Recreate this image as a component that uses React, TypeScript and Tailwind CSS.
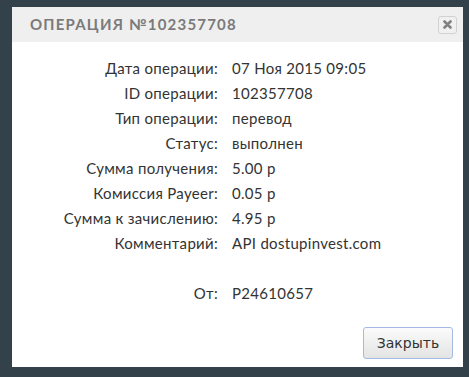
const rows: [string, string][] = [
  ["Дата операции:", "07 Ноя 2015 09:05"],
  ["ID операции:", "102357708"],
  ["Тип операции:", "перевод"],
  ["Статус:", "выполнен"],
  ["Сумма получения:", "5.00 р"],
  ["Комиссия Payeer:", "0.05 р"],
  ["Сумма к зачислению:", "4.95 р"],
  ["Комментарий:", "API dostupinvest.com"],
  ["", ""],
  ["От:", "P24610657"],
];

export default function App() {
  return (
    <div className="h-[377px] w-[469px] bg-[#33414a] pl-[12px] pt-[7px]">
      <div className="flex h-[360px] w-[451px] flex-col bg-white">
        {/* header */}
        <div className="flex h-[35px] items-center justify-between bg-[#efefef] pl-[18px] pr-[6px]">
          <span className="font-['Lato',sans-serif] text-[15px] font-bold tracking-[1.2px] text-[#7a7a7a]">
            ОПЕРАЦИЯ №102357708
          </span>
          <button className="flex h-[18px] w-[19px] items-center justify-center rounded-[3px] border border-[#d2d2d2] bg-[#f0f0f0]">
            <svg width="9" height="9" viewBox="0 0 9 9">
              <path d="M1.5 1.5 L7.5 7.5 M7.5 1.5 L1.5 7.5" stroke="#808080" strokeWidth="2.6" strokeLinecap="round" />
            </svg>
          </button>
        </div>

        {/* body */}
        <div className="flex flex-col pt-[14px] font-['Lato',sans-serif] text-[15px] tracking-[0.3px] text-[#333]">
          {rows.map(([k, v], i) => (
            <div key={i} className="flex h-[25px] items-center">
              <div className="w-[206px] text-right">{k}</div>
              <div className="pl-[14px]">{v}</div>
            </div>
          ))}
        </div>

        <div className="mt-auto flex justify-end pb-[8px] pr-[10px]">
          <button className="h-[32px] w-[90px] rounded-[3px] border border-[#a3bbe3] bg-gradient-to-b from-[#fbfbfb] to-[#e4e4e4] font-['DejaVu_Sans',sans-serif] text-[14px] text-[#333]">
            Закрыть
          </button>
        </div>
      </div>
    </div>
  );
}
